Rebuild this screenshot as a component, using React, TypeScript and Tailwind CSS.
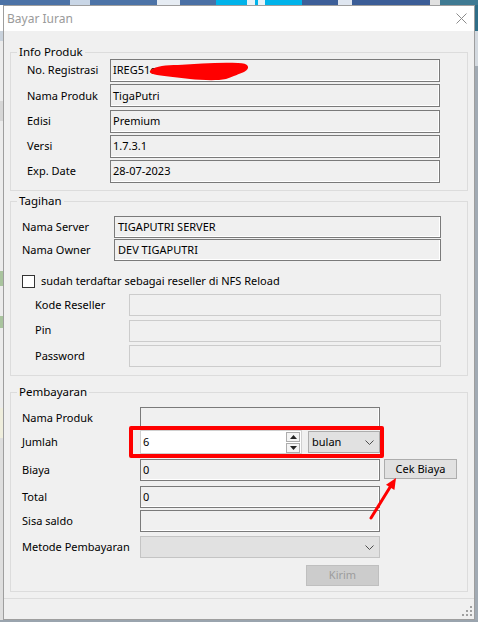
import React from "react";

type BoxProps = { className?: string; children?: React.ReactNode };

// readonly textbox, sunken look
function Field({ className = "", children }: BoxProps) {
  return (
    <div
      className={`relative flex items-center border border-[#7a7a7a] bg-[#f0f0f0] pl-[2px] shadow-[inset_-1px_-1px_0_#ffffff] ${className}`}
    >
      {children}
    </div>
  );
}

function DisabledField({ className = "" }: BoxProps) {
  return <div className={`border border-[#cccccc] bg-[#f0f0f0] ${className}`} />;
}

function Chevron() {
  return (
    <svg width="9" height="5" viewBox="0 0 9 5" className="shrink-0">
      <path d="M0.5 0.5 L4.5 4.5 L8.5 0.5" fill="none" stroke="#4d4d4d" strokeWidth="1" />
    </svg>
  );
}

function Group({ title, className = "", children }: { title: string; className?: string; children: React.ReactNode }) {
  return (
    <fieldset className={`mx-[6px] border border-[#dcdcdc] ${className}`}>
      <legend className="ml-[6px] px-[2px] text-[11.5px] leading-[14px]">{title}</legend>
      {children}
    </fieldset>
  );
}

const info = [
  { label: "No. Registrasi", value: "IREG51o" },
  { label: "Nama Produk", value: "TigaPutri" },
  { label: "Edisi", value: "Premium" },
  { label: "Versi", value: "1.7.3.1" },
  { label: "Exp. Date", value: "28-07-2023" },
];

const tagihan = [
  { label: "Nama Server", value: "TIGAPUTRI SERVER" },
  { label: "Nama Owner", value: "DEV TIGAPUTRI" },
];

export default function App() {
  return (
    <div className="relative h-[622px] w-[478px] overflow-hidden bg-[#9aa4ae] font-['Noto_Sans',sans-serif] text-[11px] text-black">
      {/* desktop strip behind the dialog */}
      <div className="flex h-[5px]">
        <div className="w-[70px] bg-[#4b72a6]" />
        <div className="w-[20px] bg-[#c9d6e6]" />
        <div className="w-[67px] bg-[#4c73a7]" />
        <div className="w-[23px] bg-[#e6ecf3]" />
        <div className="w-[36px] bg-[#4a70a5]" />
        <div className="w-[31px] bg-[#00b3ea]" />
        <div className="w-[8px] bg-[#e8f2f8]" />
        <div className="w-[3px] bg-[#00b3ea]" />
        <div className="w-[7px] bg-[#e8f2f8]" />
        <div className="w-[37px] bg-[#00b3ea]" />
        <div className="w-[36px] bg-[#3d5f99]" />
        <div className="w-[14px] bg-[#dfe6f0]" />
        <div className="w-[78px] bg-[#3b5d97]" />
        <div className="w-[10px] bg-[#e0e0e0]" />
        <div className="flex-1 bg-[#3f7a93]" />
      </div>

      <div className="flex">
        {/* sliver of another window on the left */}
        <div className="flex w-[3px] flex-col">
          <div className="h-[26px] bg-white" />
          <div className="h-[10px] bg-[#c9d2dc]" />
          <div className="h-[60px] bg-[#ececec]" />
          <div className="h-[20px] bg-[#d6d6d6]" />
          <div className="h-[150px] bg-[#ececec]" />
          <div className="h-[15px] bg-[#a9c49e]" />
          <div className="h-[30px] bg-[#ececec]" />
          <div className="h-[12px] bg-[#a9c49e]" />
          <div className="h-[80px] bg-[#ececec]" />
          <div className="h-[30px] bg-[#efeedd]" />
          <div className="flex-1 bg-[#dedede]" />
        </div>

        {/* dialog */}
        <div className="flex h-[615px] w-[472px] flex-col border border-[#9e9e9e] bg-[#f0f0f0]">
          <div className="flex h-[25px] items-center justify-between bg-white pl-[3px] pr-[7px]">
            <span className="text-[12px] text-[#9a9a9a]">Bayar Iuran</span>
            <svg width="11" height="11" viewBox="0 0 11 11">
              <path d="M0.5 0.5 L10.5 10.5 M10.5 0.5 L0.5 10.5" stroke="#8c8c8c" strokeWidth="1" />
            </svg>
          </div>

          <div className="pt-[14px]">
            <Group title="Info Produk">
              <div className="flex flex-col gap-[2.25px] pb-[7px] pl-[16px] pr-[27px]">
                {info.map((r, i) => (
                  <div key={r.label} className="flex h-[23px] items-center">
                    <span className="w-[83px]">{r.label}</span>
                    <Field className="h-full flex-1">
                      <span>{r.value}</span>
                      {i === 0 && (
                        <svg
                          className="absolute left-[35px] top-[1px]"
                          width="106"
                          height="20"
                          viewBox="0 0 106 20"
                        >
                          <path
                            d="M5 9 C 10 5, 20 4, 32 4 C 52 3, 72 1, 92 2 C 103 2, 105 7, 98 11 C 93 13, 88 15, 80 18 C 70 20, 55 19, 44 18 C 33 17, 20 15, 11 14 C 5 13, 2 11, 5 9 Z"
                            fill="#ff0000"
                          />
                        </svg>
                      )}
                    </Field>
                  </div>
                ))}
              </div>
            </Group>

            <Group title="Tagihan" className="mt-[3px]">
              <div className="pb-[8px] pl-[11px] pr-[26px] pt-[8px]">
                <div className="flex flex-col gap-[1px]">
                  {tagihan.map((r) => (
                    <div key={r.label} className="flex h-[22px] items-center">
                      <span className="w-[92px]">{r.label}</span>
                      <Field className="h-full flex-1 pl-[3px]">{r.value}</Field>
                    </div>
                  ))}
                </div>
                <div className="mt-[14px] flex h-[13px] items-center gap-[6px]">
                  <div className="h-[13px] w-[13px] border border-[#333333] bg-white" />
                  <span>sudah terdaftar sebagai reseller di NFS Reload</span>
                </div>
                <div className="mt-[6px] flex flex-col gap-[3.5px] pl-[13px]">
                  {["Kode Reseller", "Pin", "Password"].map((l) => (
                    <div key={l} className="flex h-[22px] items-center">
                      <span className="w-[94px]">{l}</span>
                      <DisabledField className="h-full flex-1" />
                    </div>
                  ))}
                </div>
              </div>
            </Group>

            <Group title="Pembayaran" className="mt-[9px]">
              <div className="pb-[5px] pl-[11px] pt-[8px]">
                <div className="flex h-[22px] items-center">
                  <span className="w-[118px]">Nama Produk</span>
                  <Field className="h-full w-[240px]" />
                </div>

                <div className="mt-[1px] flex h-[24px] items-center">
                  <span className="w-[118px]">Jumlah</span>
                  <div className="flex h-full w-[162px] items-center justify-between border border-[#d0d0d0] bg-white pl-[2px] pr-[1px]">
                    <span>6</span>
                    <div className="flex flex-col gap-[1px]">
                      <div className="flex h-[10px] w-[14px] items-center justify-center border border-[#adadad] bg-[#f4f4f4]">
                        <svg width="7" height="4" viewBox="0 0 7 4">
                          <path d="M0 4 L3.5 0 L7 4 Z" fill="#222" />
                        </svg>
                      </div>
                      <div className="flex h-[10px] w-[14px] items-center justify-center border border-[#adadad] bg-[#f4f4f4]">
                        <svg width="7" height="4" viewBox="0 0 7 4">
                          <path d="M0 0 L3.5 4 L7 0 Z" fill="#222" />
                        </svg>
                      </div>
                    </div>
                  </div>
                  <div className="ml-[6px] flex h-[22px] w-[72px] items-center justify-between border border-[#adadad] bg-[#e1e1e1] pl-[3px] pr-[5px]">
                    <span>bulan</span>
                    <Chevron />
                  </div>
                </div>

                <div className="mt-[5px] flex h-[22px] items-start">
                  <span className="flex h-full w-[118px] items-center">Biaya</span>
                  <Field className="h-full w-[240px]">0</Field>
                  <button className="ml-[4px] h-[20px] w-[73px] border border-[#adadad] bg-[#e1e1e1] text-[11px]">
                    Cek Biaya
                  </button>
                </div>

                <div className="mt-[5px] flex h-[22px] items-center">
                  <span className="w-[118px]">Total</span>
                  <Field className="h-full w-[240px]">0</Field>
                </div>

                <div className="mt-[2px] flex h-[22px] items-center">
                  <span className="w-[118px]">Sisa saldo</span>
                  <Field className="h-full w-[240px]" />
                </div>

                <div className="mt-[4px] flex h-[22px] items-center">
                  <span className="w-[118px]">Metode Pembayaran</span>
                  <div className="flex h-full w-[240px] items-center justify-end border border-[#c4c4c4] bg-[#e1e1e1] pr-[5px]">
                    <Chevron />
                  </div>
                </div>

                <div className="ml-[284px] mt-[7px] flex h-[21px] w-[73px] items-center justify-center border border-[#bfbfbf] bg-[#cccccc] text-[#9c9c9c]">
                  Kirim
                </div>
              </div>
            </Group>
          </div>

          <div className="mt-[6px] h-[1px] bg-[#dcdcdc]" />
          <div className="flex flex-1 items-end justify-end pb-[2px] pr-[1px]">
            <svg width="12" height="12" viewBox="0 0 12 12">
              <rect x="9" y="1" width="2" height="2" fill="#a0a0a0" />
              <rect x="5" y="5" width="2" height="2" fill="#a0a0a0" />
              <rect x="9" y="5" width="2" height="2" fill="#a0a0a0" />
              <rect x="1" y="9" width="2" height="2" fill="#a0a0a0" />
              <rect x="5" y="9" width="2" height="2" fill="#a0a0a0" />
              <rect x="9" y="9" width="2" height="2" fill="#a0a0a0" />
            </svg>
          </div>
        </div>

        {/* sliver on the right */}
        <div className="flex w-[3px] flex-col">
          <div className="h-[26px] bg-[#2f6d87]" />
          <div className="h-[35px] bg-[#d3d9df]" />
          <div className="flex-1 bg-[#a1aab3]" />
        </div>
      </div>

      {/* red annotations drawn over the screenshot */}
      <div className="absolute left-[129px] top-[426px] h-[32px] w-[255px] rounded-[2px] border-[4px] border-[#ff0000]" />
      <svg className="absolute left-[365px] top-[474px]" width="36" height="50" viewBox="0 0 36 50">
        <path d="M6 44 L27 10" stroke="#ff0000" strokeWidth="3" strokeLinecap="round" />
        <polygon points="31,4 29.4,16 21,10.7" fill="#ff0000" />
      </svg>
    </div>
  );
}
